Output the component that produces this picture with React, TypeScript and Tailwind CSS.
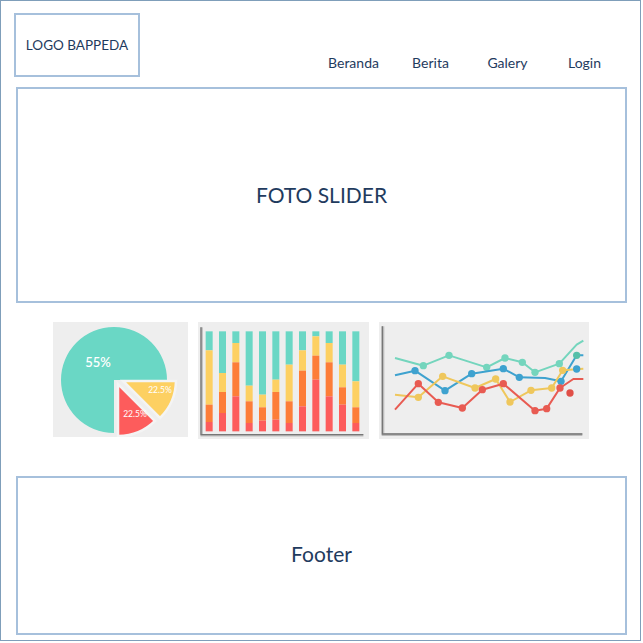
import React from 'react';

const TEAL = '#6ad7c5';
const YELLOW = '#fdd062';
const ORANGE = '#fd7d38';
const RED = '#fd5c5c';

// stacked bars, values in a 3x zoom grid (top 40, bottom 340)
const bars: number[][] = [
  [97, 260, 312],
  [165, 222, 285],
  [75, 133, 235],
  [203, 250, 315],
  [230, 268, 308],
  [185, 222, 305],
  [140, 250, 315],
  [97, 158, 265],
  [55, 113, 185],
  [75, 133, 235],
  [140, 208, 260],
  [190, 268, 315],
];

const lines: { color: string; pts: number[][]; dots: number[] }[] = [
  {
    color: '#74d5bd',
    pts: [[60, 120], [145, 143], [222, 112], [335, 148], [390, 120], [442, 133], [480, 163], [553, 137], [605, 80], [625, 68]],
    dots: [1, 2, 3, 4, 5, 6, 7],
  },
  {
    color: '#3ea2cf',
    pts: [[60, 172], [120, 158], [210, 218], [290, 167], [385, 152], [433, 178], [510, 180], [558, 190], [605, 112], [625, 112]],
    dots: [1, 2, 3, 4, 5, 7],
  },
  {
    color: '#efc75c',
    pts: [[60, 230], [130, 238], [203, 175], [300, 210], [362, 183], [405, 252], [468, 217], [530, 210], [563, 157], [625, 152]],
    dots: [1, 2, 3, 4, 5, 6, 7, 8],
  },
  {
    color: '#e85b52',
    pts: [[60, 275], [130, 197], [190, 253], [262, 270], [322, 215], [385, 197], [480, 278], [515, 272], [555, 210], [595, 183], [625, 183]],
    dots: [1, 2, 3, 4, 5, 6, 7, 8],
  },
];

const PieChart = () => (
  <svg width="135" height="115" viewBox="53 322 135 115" className="bg-[#eeeeee] block font-['Lato',sans-serif]">
    <path d="M114 380 L167 380 A53 53 0 1 0 114 433 Z" fill={TEAL} />
    <path d="M118 384 L118 436 A52 52 0 0 0 155 421 Z" fill={RED} stroke="#f4f4f4" strokeWidth="2.5" />
    <path d="M123 381 L160 418 A53 53 0 0 0 176 381 Z" fill={YELLOW} stroke="#f4f4f4" strokeWidth="2.5" />
    <text x="98" y="367" fill="#fff" fontSize="13" fontWeight="600" textAnchor="middle">55%</text>
    <text x="135" y="417" fill="#fff" fontSize="8.5" textAnchor="middle">22.5%</text>
    <text x="160" y="393" fill="#fff" fontSize="8.5" textAnchor="middle">22.5%</text>
  </svg>
);

const BarChart = () => (
  <svg width="171" height="117" viewBox="9 12 513 351" className="bg-[#eeeeee] block">
    {bars.map((b, i) => {
      const x = 32 + i * 40;
      const segs = [
        [40, b[0], TEAL],
        [b[0], b[1], YELLOW],
        [b[1], b[2], ORANGE],
        [b[2], 340, RED],
      ] as [number, number, string][];
      return (
        <g key={i}>
          {segs.map(([a, z, c], j) => (
            <rect key={j} x={x} y={a} width="21" height={z - a} fill={c} />
          ))}
        </g>
      );
    })}
    <path d="M20 28 L20 352 L505 352" fill="none" stroke="#bdbdbd" strokeWidth="7" />
    <path d="M18 28 L18 350 L505 350" fill="none" stroke="#777" strokeWidth="4" />
  </svg>
);

const LineChart = () => (
  <svg width="210" height="117" viewBox="12 12 630 351" className="bg-[#eeeeee] block">
    <path d="M24 25 L24 350 L622 350" fill="none" stroke="#bcbcbc" strokeWidth="8" />
    <path d="M22 25 L22 348 L622 348" fill="none" stroke="#777" strokeWidth="4" />
    {lines.map((l, i) => (
      <g key={i}>
        <polyline points={l.pts.map((p) => p.join(',')).join(' ')} fill="none" stroke={l.color} strokeWidth="6" strokeLinejoin="round" />
        {l.dots.map((d) => (
          <circle key={d} cx={l.pts[d][0]} cy={l.pts[d][1]} r="11" fill={l.color} />
        ))}
      </g>
    ))}
    <circle cx="605" cy="153" r="11" fill="#3ea2cf" />
    <circle cx="605" cy="112" r="11" fill="#55bfa9" />
    <circle cx="585" cy="225" r="11" fill="#e04f47" />
  </svg>
);

const App: React.FC = () => {
  return (
    <div className="w-[643px] h-[643px] bg-white font-['Lato',sans-serif] text-[#1f3b5e]">
      <div className="w-[641px] h-[641px] border border-[#7f9eba]">
        {/* header */}
        <div className="flex items-start h-[86px] pt-[12px] pl-[13px]">
          <div className="w-[126px] h-[64px] border-2 border-[#a6c0dc] flex items-center justify-center text-[13.5px]">
            LOGO BAPPEDA
          </div>
          <nav className="flex ml-[175px] mt-[39px] text-[14px]">
            <span className="w-[77px] text-center">Beranda</span>
            <span className="w-[77px] text-center">Berita</span>
            <span className="w-[77px] text-center">Galery</span>
            <span className="w-[77px] text-center">Login</span>
          </nav>
        </div>

        {/* slider */}
        <div className="ml-[15px] w-[611px] h-[216px] border-2 border-[#a6c0dc] flex items-center justify-center text-[21px]">
          FOTO SLIDER
        </div>

        {/* charts */}
        <div className="flex items-start gap-[10px] pl-[52px] mt-[19px]">
          <PieChart />
          <BarChart />
          <LineChart />
        </div>

        {/* footer */}
        <div className="ml-[15px] mt-[37px] w-[611px] h-[159px] border-2 border-[#a6c0dc] flex items-center justify-center text-[21px] pb-[3px]">
          Footer
        </div>
      </div>
    </div>
  );
};

export default App;
